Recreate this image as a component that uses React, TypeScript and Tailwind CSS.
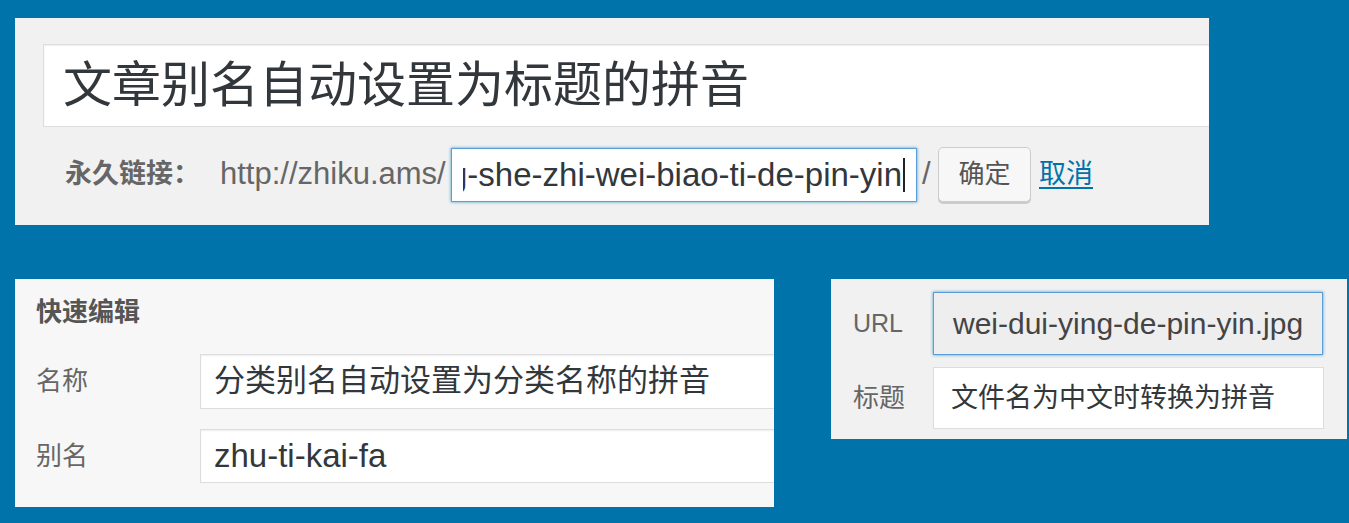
const FONT = "font-['Liberation_Sans','Noto_Sans_CJK_SC',sans-serif]";

function PermalinkRow() {
  return (
    <div className="mt-[20px] flex h-[55px] items-center pl-[22px]">
      <span className="w-[155px] shrink-0 whitespace-nowrap text-[27px] font-bold text-[#666]">永久链接：</span>
      <span className="w-[231px] shrink-0 whitespace-nowrap text-[31px] text-[#666]">http://zhiku.ams/</span>
      <div className="flex h-[54px] w-[466px] shrink-0 items-center border border-[#5b9dd9] bg-white pl-[11px] pr-[11px] shadow-[0_0_3px_rgba(30,140,190,0.8)]">
        <div className="flex flex-1 items-center justify-end overflow-hidden whitespace-nowrap text-[33px] text-[#32373c]">
          <span>wen-zhang-bie-ming-zi-dong-she-zhi-wei-biao-ti-de-pin-yin</span>
          <span className="ml-[1px] inline-block h-[34px] w-[2px] shrink-0 bg-[#222]" />
        </div>
      </div>
      <span className="w-[21px] shrink-0 pl-[5px] text-[31px] text-[#666]">/</span>
      <button className="h-[55px] w-[93px] shrink-0 rounded-[5px] border border-[#ccc] bg-[#f7f7f7] text-[26px] text-[#555] shadow-[0_2px_0_#ccc]">
        确定
      </button>
      <a href="#" className="ml-[8px] whitespace-nowrap text-[27px] text-[#0073aa] underline underline-offset-4">
        取消
      </a>
    </div>
  );
}

function Field({
  label,
  children,
  className,
}: {
  label: string;
  children: React.ReactNode;
  className: string;
}) {
  return (
    <div className="flex items-center">
      <span className="w-[164px] shrink-0 text-[26px] text-[#666]">{label}</span>
      <div className={className}>{children}</div>
    </div>
  );
}

export default function App() {
  return (
    <div className={`${FONT} h-[523px] w-[1349px] overflow-hidden bg-[#0073aa] pt-[18px]`}>
      {/* post title + permalink */}
      <div className="ml-[15px] h-[207px] w-[1194px] overflow-hidden bg-[#f1f1f1] pl-[28px] pt-[26px]">
        <div className="flex h-[83px] items-center border border-r-0 border-[#ddd] bg-white pl-[19px] text-[49px] text-[#32373c] shadow-[inset_0_1px_2px_rgba(0,0,0,0.07)]">
          文章别名自动设置为标题的拼音
        </div>
        <PermalinkRow />
      </div>

      <div className="mt-[54px] flex items-start">
        {/* quick edit */}
        <div className="ml-[15px] h-[228px] w-[759px] overflow-hidden bg-[#f7f7f7] pl-[21px] pt-[18px]">
          <div className="h-[30px] text-[26px] leading-[30px] font-bold text-[#555]">快速编辑</div>
          <div className="mt-[27px] flex flex-col gap-[20px]">
            <Field
              label="名称"
              className="flex h-[55px] flex-1 items-center border border-r-0 border-[#ddd] bg-white pl-[13px] text-[31px] text-[#32373c] shadow-[inset_0_1px_2px_rgba(0,0,0,0.07)]"
            >
              分类别名自动设置为分类名称的拼音
            </Field>
            <Field
              label="别名"
              className="flex h-[54px] flex-1 items-center border border-r-0 border-[#ddd] bg-white pl-[13px] text-[33px] text-[#32373c] shadow-[inset_0_1px_2px_rgba(0,0,0,0.07)]"
            >
              zhu-ti-kai-fa
            </Field>
          </div>
        </div>

        {/* attachment details */}
        <div className="ml-[57px] flex h-[160px] w-[516px] flex-col gap-[12px] bg-[#f1f1f1] pl-[22px] pt-[13px]">
          <div className="flex items-center">
            <span className="w-[80px] text-[25px] text-[#666]">URL</span>
            <div className="flex h-[63px] w-[390px] items-center border border-[#5b9dd9] bg-[#eee] pl-[19px] text-[30px] whitespace-nowrap text-[#444] shadow-[0_0_3px_rgba(30,140,190,0.8)]">
              wei-dui-ying-de-pin-yin.jpg
            </div>
          </div>
          <div className="flex items-center">
            <span className="w-[80px] text-[26px] text-[#666]">标题</span>
            <div className="flex h-[62px] w-[391px] items-center border border-[#ddd] bg-white pl-[17px] text-[27px] whitespace-nowrap text-[#32373c]">
              文件名为中文时转换为拼音
            </div>
          </div>
        </div>
      </div>
    </div>
  );
}
